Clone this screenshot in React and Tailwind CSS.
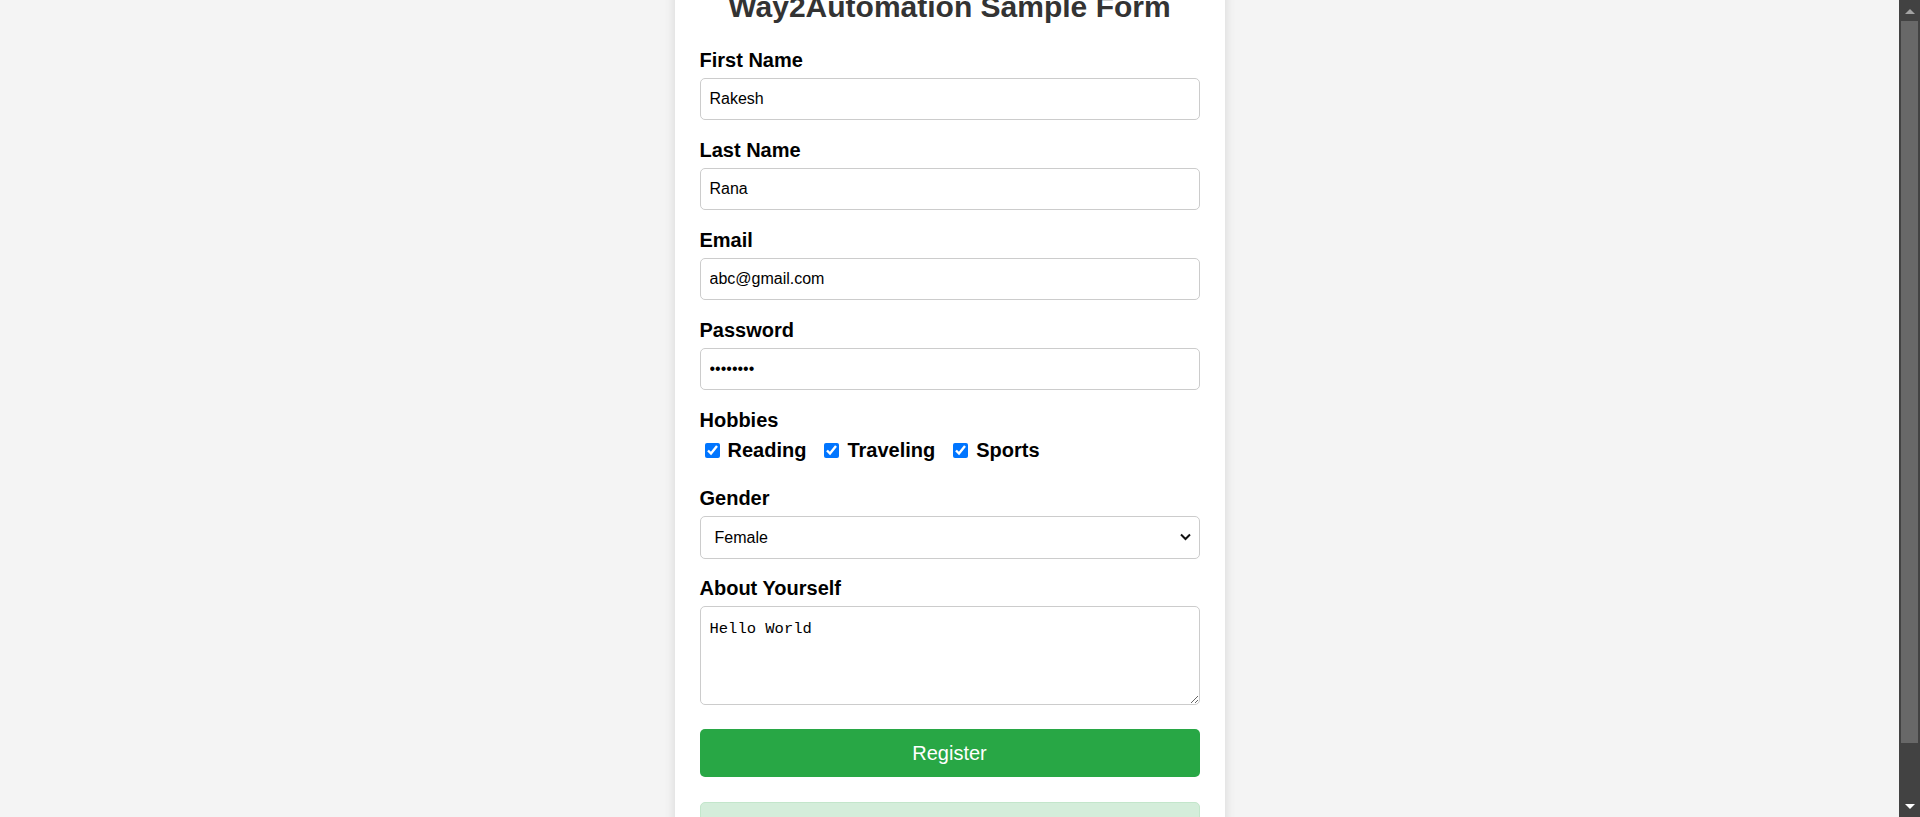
import React from 'react';

const hobbies = ['Reading', 'Traveling', 'Sports'];

function Field({ label, children, last }) {
  return (
    <div className={last ? '' : 'mb-[19px]'}>
      <label className="block text-[20px] leading-[23px] font-bold text-black mb-[6px]">{label}</label>
      {children}
    </div>
  );
}

function TextInput({ type = 'text', value }) {
  return (
    <input
      type={type}
      defaultValue={value}
      className="block w-full h-[42px] px-[9px] border border-[#ccc] rounded-[5px] bg-white text-[16px] text-black outline-none"
    />
  );
}

function Scrollbar() {
  return (
    <div className="w-[21px] h-full bg-[#424242] flex flex-col shrink-0">
      <div className="h-[21px] flex items-center justify-center">
        <svg width="10" height="6" viewBox="0 0 10 6">
          <polygon points="0,6 5,1 10,6" fill="#a3a3a3" />
        </svg>
      </div>
      <div className="h-[722px] mx-[2px] bg-[#686868]" />
      <div className="flex-1" />
      <div className="h-[21px] flex items-center justify-center">
        <svg width="10" height="6" viewBox="0 0 10 6">
          <polygon points="0,0 10,0 5,5" fill="#ffffff" />
        </svg>
      </div>
    </div>
  );
}

export default function App() {
  return (
    <div className="flex w-full h-[817px] overflow-hidden font-['Liberation_Sans',Arial,sans-serif]">
      <div className="flex-1 bg-[#f4f4f4] overflow-hidden flex justify-center">
        <div className="w-[550px] -mt-[35px] self-start bg-white rounded-[10px] shadow-[0_0_12px_rgba(0,0,0,0.12)] px-[25px] pt-[25px] pb-[25px]">
          <h2 className="text-[30px] leading-[34px] font-bold text-[#333] text-center mb-[25px]">
            Way2Automation Sample Form
          </h2>

          <Field label="First Name">
            <TextInput value="Rakesh" />
          </Field>
          <Field label="Last Name">
            <TextInput value="Rana" />
          </Field>
          <Field label="Email">
            <TextInput type="email" value="abc@gmail.com" />
          </Field>
          <Field label="Password">
            <TextInput type="password" value="12345678" />
          </Field>

          <div className="mb-[25px]">
            <label className="block text-[20px] leading-[23px] font-bold text-black mb-[6px]">Hobbies</label>
            <div className="flex items-center h-[24px]">
              {hobbies.map((h) => (
                <label key={h} className="flex items-center mr-[13px]">
                  <input
                    type="checkbox"
                    defaultChecked
                    className="w-[15px] h-[15px] ml-[5px] accent-[#0075ff]"
                  />
                  <span className="ml-[8px] text-[20px] leading-[23px] font-bold text-black">{h}</span>
                </label>
              ))}
            </div>
          </div>

          <div className="mb-[18px]">
            <label className="block text-[20px] leading-[23px] font-bold text-black mb-[6px]">Gender</label>
            <div className="relative">
              <select
                defaultValue="Female"
                className="block w-full h-[43px] pl-[14px] pr-[30px] border border-[#ccc] rounded-[5px] bg-white text-[16px] text-black appearance-none outline-none"
              >
                <option>Male</option>
                <option>Female</option>
                <option>Other</option>
              </select>
              <svg
                className="absolute right-[9px] top-[17px] pointer-events-none"
                width="11"
                height="8"
                viewBox="0 0 11 8"
              >
                <polyline points="1,1.5 5.5,6 10,1.5" fill="none" stroke="#111" strokeWidth="2" />
              </svg>
            </div>
          </div>

          <div className="mb-[24px]">
            <label className="block text-[20px] leading-[23px] font-bold text-black mb-[6px]">About Yourself</label>
            <textarea
              defaultValue="Hello World"
              className="block w-full h-[99px] px-[9px] pt-[13px] border border-[#ccc] rounded-[5px] bg-white text-[15.5px] leading-[18px] text-black font-['Liberation_Mono',monospace] outline-none"
            />
          </div>

          <button className="block w-full h-[48px] bg-[#28a745] rounded-[5px] text-white text-[20px] mb-[25px]">
            Register
          </button>

          <div className="h-[60px] bg-[#d4edda] border border-[#c3e6cb] rounded-[5px]" />
        </div>
      </div>
      <Scrollbar />
    </div>
  );
}
